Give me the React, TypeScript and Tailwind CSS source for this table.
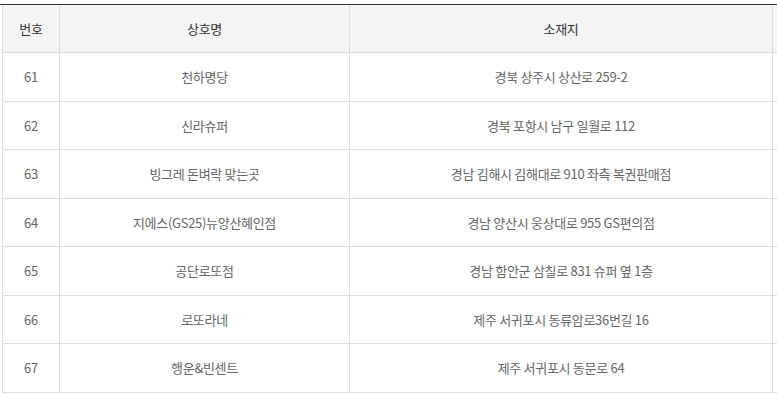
const rows = [
  { no: 61, name: "천하명당", addr: "경북 상주시 상산로 259-2" },
  { no: 62, name: "신라슈퍼", addr: "경북 포항시 남구 일월로 112" },
  { no: 63, name: "빙그레 돈벼락 맞는곳", addr: "경남 김해시 김해대로 910 좌측 복권판매점" },
  { no: 64, name: "지에스(GS25)뉴양산혜인점", addr: "경남 양산시 웅상대로 955 GS편의점" },
  { no: 65, name: "공단로또점", addr: "경남 함안군 삼칠로 831 슈퍼 옆 1층" },
  { no: 66, name: "로또라네", addr: "제주 서귀포시 동류암로36번길 16" },
  { no: 67, name: "행운&빈센트", addr: "제주 서귀포시 동문로 64" },
];

export default function App() {
  return (
    <div
      className="w-[777px] h-[395px] overflow-hidden bg-white pt-[4px]"
      style={{ fontFamily: '"Noto Sans CJK KR", "Noto Sans", sans-serif' }}
    >
      <div className="w-[800px] border-t border-[#333]">
        {/* header */}
        <div className="flex h-[48px] bg-[#f4f4f4] border-b border-[#ddd] ml-[2px] text-[13px] tracking-[-0.3px] text-[#333]">
          <div className="w-[57px] flex items-center justify-center border-l border-[#ddd]">번호</div>
          <div className="w-[290px] flex items-center justify-center border-l border-[#ddd]">상호명</div>
          <div className="w-[423px] flex items-center justify-center border-l border-[#ddd]">소재지</div>
          <div className="flex-1 border-l border-[#ddd]" />
        </div>
        {rows.map((r) => (
          <div
            key={r.no}
            className="flex h-[48.5px] border-b border-[#ddd] ml-[2px] text-[13px] tracking-[-0.3px] text-[#666]"
          >
            <div className="w-[57px] flex items-center justify-center border-l border-[#ddd]">{r.no}</div>
            <div className="w-[290px] flex items-center justify-center border-l border-[#ddd]">{r.name}</div>
            <div className="w-[423px] flex items-center justify-center border-l border-[#ddd]">{r.addr}</div>
            <div className="flex-1 border-l border-[#ddd] bg-white" />
          </div>
        ))}
      </div>
    </div>
  );
}
